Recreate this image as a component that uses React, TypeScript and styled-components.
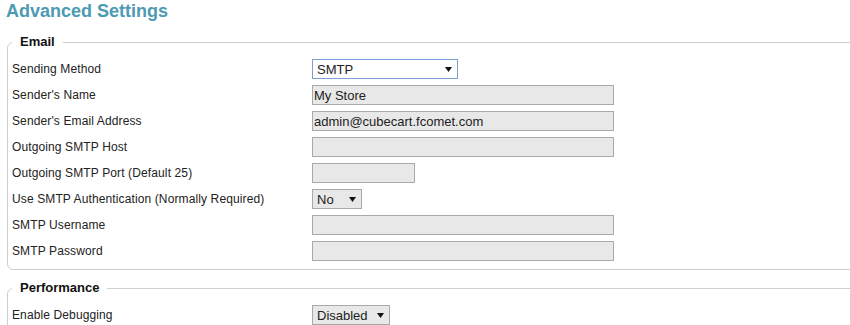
import styled, { createGlobalStyle } from "styled-components";
import { type FC } from "react";

//global page reset
const GlobalStyle = createGlobalStyle`
  html, body {
    margin: 0;
    padding: 0;
    background: #fff;
    overflow: hidden;
  }
  body {
    font-family: "Liberation Sans", Arial, sans-serif;
    color: #222;
  }
`;

//type declarations.
interface FieldRow {
  label: string;
  kind: "text" | "select";
  value?: string;
  width: number;
  focused?: boolean;
}

interface SectionProps {
  title: string;
  rows: FieldRow[];
}

// =====================Layout==================================>
const Page = styled.div`
  width: 850px;
  height: 325px;
  overflow: hidden;
`;

const Heading = styled.h2`
  margin: 0;
  padding: 0 6px;
  font-size: 18px;
  line-height: 22px;
  font-weight: bold;
  color: #4d9ab3;
`;

const Fieldset = styled.fieldset<{ $gap: number }>`
  margin: ${(p) => p.$gap}px -40px 0 7px;
  padding: 6px 4px 5px 4px;
  border: 1px solid #cfcfcf;
  border-radius: 6px;
  min-width: 0;
`;

const Legend = styled.legend`
  padding: 0 8px;
  font-size: 13px;
  line-height: 16px;
  font-weight: bold;
  color: #111;
`;

const Row = styled.div`
  display: grid;
  grid-template-columns: 300px 1fr;
  align-items: center;
  height: 26px;
`;

const Label = styled.label`
  font-size: 12px;
  letter-spacing: 0.12px;
  color: #222;
`;

// =====================Controls==================================>
const TextInput = styled.input<{ $w: number }>`
  box-sizing: border-box;
  width: ${(p) => p.$w}px;
  height: 20px;
  margin: 0;
  padding: 0 1px;
  border: 1px solid #a9a9a9;
  background: #e8e8e8;
  font-family: inherit;
  font-size: 13px;
  color: #222;
  outline: none;
`;

const SelectBox = styled.div<{ $w: number; $focused?: boolean }>`
  box-sizing: border-box;
  position: relative;
  display: flex;
  align-items: center;
  width: ${(p) => p.$w}px;
  height: 20px;
  padding: 0 4px;
  border: 1px solid ${(p) => (p.$focused ? "#7b9fd6" : "#a9a9a9")};
  background: ${(p) => (p.$focused ? "#fff" : "#e8e8e8")};
  font-size: 13px;
  color: #222;

  svg {
    position: absolute;
    right: 5px;
    top: 7px;
  }
`;

const Caret: FC = () => (
  <svg width="7" height="5" viewBox="0 0 7 5">
    <path d="M0 0 H7 L3.5 5 Z" fill="#111" />
  </svg>
);

// ================================================================>
const Section: FC<SectionProps & { gap: number }> = ({ title, rows, gap }) => (
  <Fieldset $gap={gap}>
    <Legend>{title}</Legend>
    {rows.map((r) => (
      <Row key={r.label}>
        <Label>{r.label}</Label>
        <div>
          {r.kind === "text" ? (
            <TextInput $w={r.width} defaultValue={r.value ?? ""} readOnly />
          ) : (
            <SelectBox $w={r.width} $focused={r.focused}>
              {r.value}
              <Caret />
            </SelectBox>
          )}
        </div>
      </Row>
    ))}
  </Fieldset>
);

const emailRows: FieldRow[] = [
  { label: "Sending Method", kind: "select", value: "SMTP", width: 146, focused: true },
  { label: "Sender's Name", kind: "text", value: "My Store", width: 302 },
  { label: "Sender's Email Address", kind: "text", value: "admin@cubecart.fcomet.com", width: 302 },
  { label: "Outgoing SMTP Host", kind: "text", width: 302 },
  { label: "Outgoing SMTP Port (Default 25)", kind: "text", width: 103 },
  { label: "Use SMTP Authentication (Normally Required)", kind: "select", value: "No", width: 50 },
  { label: "SMTP Username", kind: "text", width: 302 },
  { label: "SMTP Password", kind: "text", width: 302 },
];

const perfRows: FieldRow[] = [
  { label: "Enable Debugging", kind: "select", value: "Disabled", width: 78 },
];

export default function App() {
  return (
    <Page>
      <GlobalStyle />
      <Heading>Advanced Settings</Heading>
      <Section title="Email" rows={emailRows} gap={12} />
      <Section title="Performance" rows={perfRows} gap={10} />
    </Page>
  );
}
